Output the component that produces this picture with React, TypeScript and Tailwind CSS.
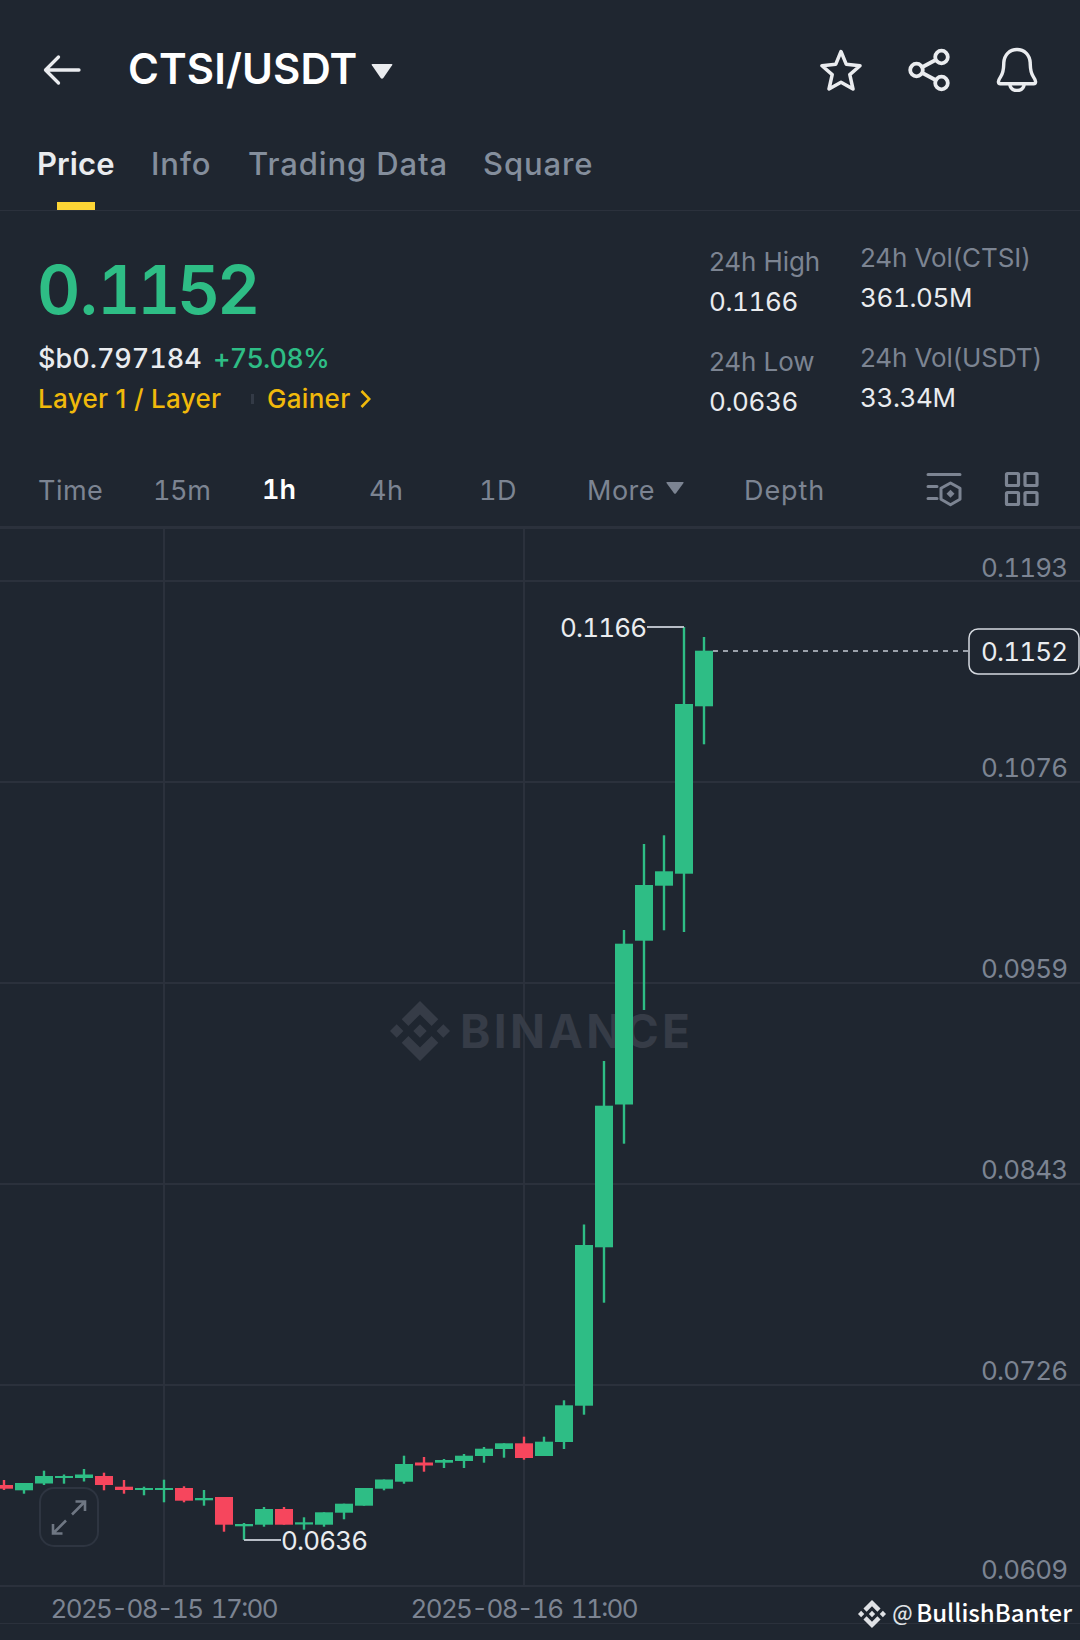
type Candle = {
  high: number;
  top: number;
  bottom: number;
  low: number;
  down?: boolean;
};

const UP = "#2ebd85";
const DOWN = "#f6465d";
const GRID = "#2b313c";
const MUTED = "#7c8492";
const LIGHT = "#eaecef";

// one candle every 20px, the first one is centred on x = 4
const candles: Candle[] = [
  { high: 1480, top: 1485, bottom: 1488.7, low: 1490, down: true },
  { high: 1483, top: 1483, bottom: 1490.3, low: 1493.7 },
  { high: 1470.7, top: 1476, bottom: 1483.5, low: 1485 },
  { high: 1474.5, top: 1476, bottom: 1478, low: 1483.7 },
  { high: 1469, top: 1474.5, bottom: 1478, low: 1481.5 },
  { high: 1472.7, top: 1476, bottom: 1485, low: 1490.3, down: true },
  { high: 1480, top: 1486.7, bottom: 1490, low: 1493.7, down: true },
  { high: 1486.7, top: 1488, bottom: 1490, low: 1495.3 },
  { high: 1479.7, top: 1488, bottom: 1490, low: 1502.3 },
  { high: 1486.3, top: 1488, bottom: 1500.7, low: 1502.3, down: true },
  { high: 1490, top: 1498, bottom: 1500.3, low: 1505.7 },
  { high: 1497, top: 1497, bottom: 1524.7, low: 1531.7, down: true },
  { high: 1523, top: 1524, bottom: 1526.3, low: 1540 },
  { high: 1507, top: 1509, bottom: 1524.7, low: 1526.7 },
  { high: 1507, top: 1509, bottom: 1524.7, low: 1524.7, down: true },
  { high: 1517.3, top: 1522.3, bottom: 1524.5, low: 1529.7 },
  { high: 1512.3, top: 1512.3, bottom: 1524.7, low: 1526.7 },
  { high: 1503.7, top: 1503.7, bottom: 1512.7, low: 1519.3 },
  { high: 1488, top: 1488, bottom: 1505.7, low: 1505.7 },
  { high: 1479.5, top: 1479.5, bottom: 1488.7, low: 1490.3 },
  { high: 1455.7, top: 1464, bottom: 1481.7, low: 1483.7 },
  { high: 1457, top: 1462.5, bottom: 1465.5, low: 1471.7, down: true },
  { high: 1459, top: 1460, bottom: 1462.7, low: 1468 },
  { high: 1454, top: 1455.7, bottom: 1461, low: 1468 },
  { high: 1447, top: 1448.7, bottom: 1456, low: 1462.7 },
  { high: 1443.3, top: 1443.3, bottom: 1449, low: 1457.7 },
  { high: 1436.7, top: 1443.3, bottom: 1458, low: 1459.7, down: true },
  { high: 1436.7, top: 1441.7, bottom: 1456, low: 1456 },
  { high: 1400.3, top: 1405.3, bottom: 1442, low: 1449 },
  { high: 1224.5, top: 1245, bottom: 1405.7, low: 1414.7 },
  { high: 1061, top: 1105.7, bottom: 1247.3, low: 1302.7 },
  { high: 930, top: 943.7, bottom: 1104.5, low: 1143.7 },
  { high: 844, top: 885, bottom: 940.7, low: 1010 },
  { high: 835.3, top: 871.3, bottom: 885.7, low: 930.3 },
  { high: 627, top: 704, bottom: 873.7, low: 932 },
  { high: 637, top: 650.7, bottom: 706.3, low: 744.3 },
];

const priceAxis = [
  { label: "0.1193", line: 581, text: 577 },
  { label: "0.1076", line: 782, text: 777 },
  { label: "0.0959", line: 983, text: 978 },
  { label: "0.0843", line: 1184, text: 1179 },
  { label: "0.0726", line: 1385, text: 1380 },
  { label: "0.0609", line: 1586, text: 1579 },
];

const BinanceMark = ({ className }: { className?: string }) => (
  <svg viewBox="0 0 60 60" className={className} fill="currentColor">
    <path d="M30 0 48.3 18.3 41.6 25 30 13.4 18.4 25 11.7 18.3Z" />
    <path d="M30 60 48.3 41.7 41.6 35 30 46.6 18.4 35 11.7 41.7Z" />
    <path d="M30 23.3 36.7 30 30 36.7 23.3 30Z" />
    <path d="M6.7 23.3 13.4 30 6.7 36.7 0 30Z" />
    <path d="M53.3 23.3 60 30 53.3 36.7 46.6 30Z" />
  </svg>
);

const Header = () => (
  <header className="flex h-[138px] items-center pl-[43px] pr-[42px] text-[#eaecef]">
    <svg viewBox="0 0 38 32" className="mt-[2px] h-8 w-[38px]" fill="none" stroke="currentColor" strokeWidth="3.300">
      <path d="M36 16H2.5M15.500 3 2.500 16 15.500 29" strokeLinecap="round" strokeLinejoin="round" />
    </svg>
    <h1 className="ml-[47px] w-[230px] whitespace-nowrap text-[42px] font-semibold leading-none tracking-[0.1px] text-white">
      CTSI/USDT
    </h1>
    <svg viewBox="0 0 22 15" className="ml-[13px] mt-[4px] h-[15px] w-[22px]" fill="currentColor">
      <path d="M1.500 0h19q1.500 0 .6 1.300L12.300 14q-1.300 1.500-2.600 0L.9 1.300Q0 0 1.500 0Z" />
    </svg>
    <div className="ml-auto mt-[2px] flex items-center gap-[46px]">
      <svg viewBox="0 0 42 42" className="size-[42px]" fill="none" stroke="currentColor" strokeWidth="3.500" strokeLinejoin="round">
        <path d="M21 2.500 26.200 15.200 40 16.700 29.800 25.600 33 40 21 33.200 9 40 12.200 25.600 2 16.700 15.800 15.200Z" />
      </svg>
      <svg viewBox="0 0 42 44" className="h-11 w-[42px]" fill="none" stroke="currentColor" strokeWidth="3.800">
        <circle cx="8.500" cy="22" r="6.300" />
        <circle cx="33.500" cy="9" r="6.300" />
        <circle cx="33.500" cy="35" r="6.300" />
        <path d="M14.500 19 27.500 12M14.500 25 27.500 32" />
      </svg>
      <svg viewBox="0 0 42 46" className="-mt-px h-[45px] w-[42px]" fill="none" stroke="currentColor" strokeWidth="3.500" strokeLinejoin="round">
        <path d="M21 2.500C13.500 2.500 8 8 7.500 16 7.300 22 7.500 25.500 4.500 30 2.500 33 2 34 2 35.500 2 36.700 2.700 37.500 4 37.500H38C39.300 37.500 40 36.700 40 35.500 40 34 39.500 33 37.500 30 34.500 25.500 34.700 22 34.500 16 34 8 28.500 2.500 21 2.500Z" />
        <path d="M13.500 37.500C14 42 17 44.500 21 44.500S28 42 28.500 37.500" />
      </svg>
    </div>
  </header>
);

const Tabs = () => (
  <nav className="flex h-[73px] border-b border-[#2b313c] pl-[37px] text-[31px] font-medium leading-[51px] tracking-[0.9px] text-[#848e9c]">
    <div className="relative mr-[38px] w-[76px] font-semibold tracking-[0.1px] text-[#eaecef]">
      Price
      <span className="absolute bottom-0 left-[20px] h-2 w-[38px] bg-[#fcd535]" />
    </div>
    <div className="w-[97px]">Info</div>
    <div className="w-[235px] whitespace-nowrap">Trading Data</div>
    <div>Square</div>
  </nav>
);

const Stat = ({ label, value }: { label: string; value: string }) => (
  <div className="text-[26px] leading-[40px]">
    <div className="whitespace-nowrap tracking-[-0.1px] text-[#7c8492]">{label}</div>
    <div className="tabular-nums tracking-[-0.4px] text-[#eaecef]">{value}</div>
  </div>
);

const Ticker = () => (
  <section className="flex h-[240px] pl-[38px]">
    <div className="w-[671px] pt-[41px]">
      <div className="-ml-px text-[67px] font-semibold leading-[76px] tabular-nums tracking-[-3.5px] text-[#2ebd85]">
        0<span className="px-[3px]">.</span>1152
      </div>
      <div className="mt-[10px] flex text-[27px] font-medium leading-[41px] tabular-nums text-[#eaecef]">
        <span className="w-[175px]">$b0.797184</span>
        <span className="tracking-[-0.8px] text-[#2ebd85]">+75.08%</span>
      </div>
      <div className="flex items-center text-[26px] font-medium leading-[40px] tracking-[0.3px] text-[#f0b90b]">
        <span className="w-[213px]">Layer 1 / Layer</span>
        <span className="mr-[13px] h-[10px] w-[3px] bg-[#333a46]" />
        <span className="w-[93px]">Gainer</span>
        <svg viewBox="0 0 11 18" className="h-[18px] w-[11px]" fill="none" stroke="currentColor" strokeWidth="2.600">
          <path d="M1.500 1 9.300 9 1.500 17" />
        </svg>
      </div>
    </div>
    <div className="flex w-[151px] flex-col gap-5 pt-[31px]">
      <Stat label="24h High" value="0.1166" />
      <Stat label="24h Low" value="0.0636" />
    </div>
    <div className="flex flex-col gap-5 pt-[27px]">
      <Stat label="24h Vol(CTSI)" value="361.05M" />
      <Stat label="24h Vol(USDT)" value="33.34M" />
    </div>
  </section>
);

const Intervals = () => (
  <div className="flex h-[78px] items-center border-b-[3px] border-[#2b313c] pl-[38px] pr-[40px] pt-[5px] text-[27px] tabular-nums tracking-[0.5px] text-[#7c8492]">
    <span className="w-[115px]">Time</span>
    <span className="w-[109px] tracking-[-0.4px]">15m</span>
    <span className="-mt-[2px] w-[107px] font-semibold tracking-normal text-white">1h</span>
    <span className="w-[110px]">4h</span>
    <span className="w-[108px]">1D</span>
    <span className="w-[79px]">More</span>
    <svg viewBox="0 0 18 12" className="-mt-[6px] h-3 w-[18px]" fill="currentColor">
      <path d="M1 0h16q1 0 .5 1L10 11.300q-1 1-2 0L.5 1Q0 0 1 0Z" />
    </svg>
    <span className="ml-[60px] tracking-[0.9px]">Depth</span>
    <svg viewBox="0 0 36 36" className="-mt-[4px] ml-auto size-9" fill="none" stroke="currentColor" strokeWidth="3">
      <path d="M2 3.500H34M2 15.500H11M2 27.500H11" strokeLinecap="round" />
      <path d="M24.500 12 34 17.300V28.300L24.500 33.700 15 28.300V17.300Z" strokeLinejoin="round" />
      <path d="M24.500 18.800 28.500 22.800 24.500 26.800 20.500 22.800Z" fill="currentColor" stroke="none" />
    </svg>
    <svg viewBox="0 0 36 36" className="-mt-[4px] ml-[42px] size-9" fill="none" stroke="currentColor" strokeWidth="3.200">
      <rect x="2.500" y="2.500" width="12" height="12" rx="1" />
      <rect x="21" y="2.500" width="12" height="12" rx="1" />
      <rect x="2.500" y="21.500" width="12" height="12" rx="1" />
      <rect x="21" y="21.500" width="12" height="12" rx="1" />
    </svg>
  </div>
);

const Chart = () => (
  <div className="relative h-[1111px]">
    <svg viewBox="0 529 1080 1111" width="1080" height="1111" className="block text-[26px] tabular-nums">
      {priceAxis.map((tick) => (
        <rect key={tick.label} x="0" y={tick.line - 1} width="1080" height="2" fill={GRID} />
      ))}
      <rect x="163" y="529" width="2" height="1057" fill={GRID} />
      <rect x="523" y="529" width="2" height="1057" fill={GRID} />
      <rect x="0" y="1623" width="1080" height="1" fill={GRID} />

      <g fill="#363c47">
        <svg x="390" y="1001" width="60" height="60" viewBox="0 0 60 60">
          <path d="M30 0 48.300 18.300 41.600 25 30 13.400 18.400 25 11.700 18.300ZM30 60 48.300 41.700 41.600 35 30 46.600 18.400 35 11.700 41.700ZM30 23.300 36.700 30 30 36.700 23.300 30ZM6.700 23.300 13.400 30 6.700 36.700 0 30ZM53.300 23.300 60 30 53.300 36.700 46.600 30Z" />
        </svg>
        <text x="460" y="1048" fontSize="46" fontWeight="700" textLength="230">
          BINANCE
        </text>
      </g>

      {candles.map((c, i) => (
        <g key={i} fill={c.down ? DOWN : UP}>
          <rect x={i * 20 + 2.8} y={c.high} width="2.400" height={c.low - c.high} />
          <rect x={i * 20 - 5} y={c.top} width="18" height={c.bottom - c.top} />
        </g>
      ))}

      {priceAxis.map((tick) => (
        <text key={tick.label} x="981" y={tick.text} fill={MUTED} textLength="87">
          {tick.label}
        </text>
      ))}

      <g fill={LIGHT}>
        <text x="560" y="637" textLength="87">0.1166</text>
        <text x="281" y="1550" textLength="87">0.0636</text>
      </g>
      <path d="M647 627H684M244 1540H281" stroke="#b7bdc6" strokeWidth="2" />
      <path d="M713 651H968" stroke="#c5cad2" strokeWidth="1.500" strokeDasharray="5 5" />
      <rect x="969" y="629" width="110" height="45" rx="9" fill="#1f2630" stroke="#d5d9df" strokeWidth="1.500" />
      <text x="981" y="661" fill={LIGHT} textLength="87">0.1152</text>

      <g fill={MUTED} wordSpacing="3">
        <text x="50.500" y="1618" textLength="228">2025-08-15 17:00</text>
        <text x="410.500" y="1618" textLength="228">2025-08-16 11:00</text>
      </g>
    </svg>

    <button className="absolute left-[39px] top-[958px] size-[60px] rounded-[15px] border-2 border-[#2e3541] text-[#6f7783]">
      <svg viewBox="0 0 56 56" className="size-14" fill="none" stroke="currentColor" strokeWidth="2.600">
        <path d="M31 25.500 44 12.500M34.500 12.500H44V22" />
        <path d="M25 31.500 12 44.500M12 35V44.500H21.500" />
      </svg>
    </button>

    <div className="absolute bottom-0 right-[8px] flex h-[52px] items-center font-['Noto_Sans_CJK_SC',sans-serif] text-[24px] font-medium text-white">
      <BinanceMark className="size-[28px] text-[#dfe1e5]" />
      <span className="-mt-[3px] ml-[6px] w-[24px] text-[21px] text-[#dfe1e5]">@</span>
      <span className="-mt-[4px]">BullishBanter</span>
    </div>
  </div>
);

const App = () => (
  <main className="h-[1640px] w-[1080px] overflow-hidden bg-[#1f2630] font-['Inter',sans-serif]">
    <Header />
    <Tabs />
    <Ticker />
    <Intervals />
    <Chart />
  </main>
);

export default App;
